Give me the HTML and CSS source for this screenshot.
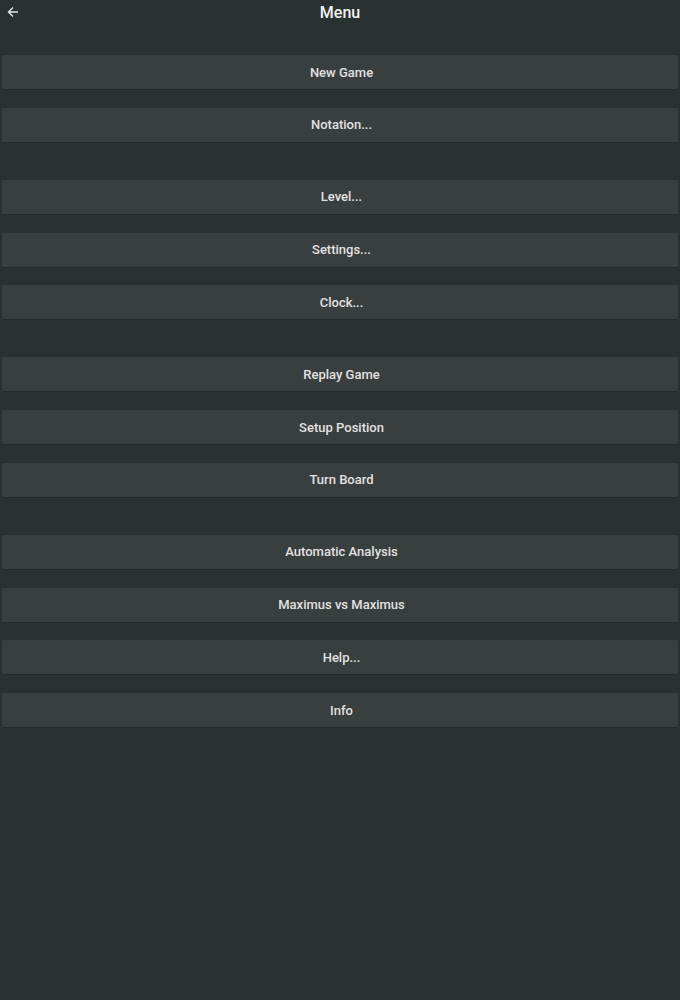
FILE: index.html
```html
<!DOCTYPE html>
<html>
<head>
<meta charset="utf-8">
<link rel="stylesheet" href="styles.css">
</head>
<body>
<header class="topbar">
  <span class="back">
    <svg width="12" height="12" viewBox="0 0 12 12"><path d="M11 6H1.5M6 1.5L1.5 6L6 10.5" fill="none" stroke="#e6e6e6" stroke-width="1.4"/></svg>
  </span>
  <h1 class="title">Menu</h1>
</header>
<main class="menu">
  <div class="group">
    <button class="item">New Game</button>
    <button class="item">Notation...</button>
  </div>
  <div class="group">
    <button class="item">Level...</button>
    <button class="item">Settings...</button>
    <button class="item">Clock...</button>
  </div>
  <div class="group">
    <button class="item">Replay Game</button>
    <button class="item">Setup Position</button>
    <button class="item">Turn Board</button>
  </div>
  <div class="group">
    <button class="item">Automatic Analysis</button>
    <button class="item">Maximus vs Maximus</button>
    <button class="item">Help...</button>
    <button class="item">Info</button>
  </div>
</main>
</body>
</html>
```
FILE: styles.css
```css
html, body {
  margin: 0;
  padding: 0;
  background: #2a3131;
  height: 100%;
}
body {
  font-family: Roboto, "Liberation Sans", sans-serif;
  color: #e8e8e8;
}
.topbar {
  position: relative;
  height: 26px;
  display: flex;
  align-items: center;
  justify-content: center;
}
.back {
  position: absolute;
  left: 7px;
  top: 6px;
  width: 12px;
  height: 12px;
  display: flex;
}
.title {
  margin: 0;
  font-size: 16px;
  font-weight: 500;
  color: #f2f2f2;
  line-height: 26px;
}
.menu {
  padding: 29px 2px 0 2px;
  display: flex;
  flex-direction: column;
  gap: 38px;
}
.group {
  display: flex;
  flex-direction: column;
  gap: 18.75px;
}
.item {
  display: block;
  width: 100%;
  height: 34px;
  border: none;
  border-radius: 1px;
  background: #393e3e;
  color: #e2e2e2;
  font-family: Roboto, "Liberation Sans", sans-serif;
  font-size: 13px;
  font-weight: 500;
  padding: 0 0 0 3px;
  box-shadow: 0 1px 0 rgba(0,0,0,0.12);
}
```
